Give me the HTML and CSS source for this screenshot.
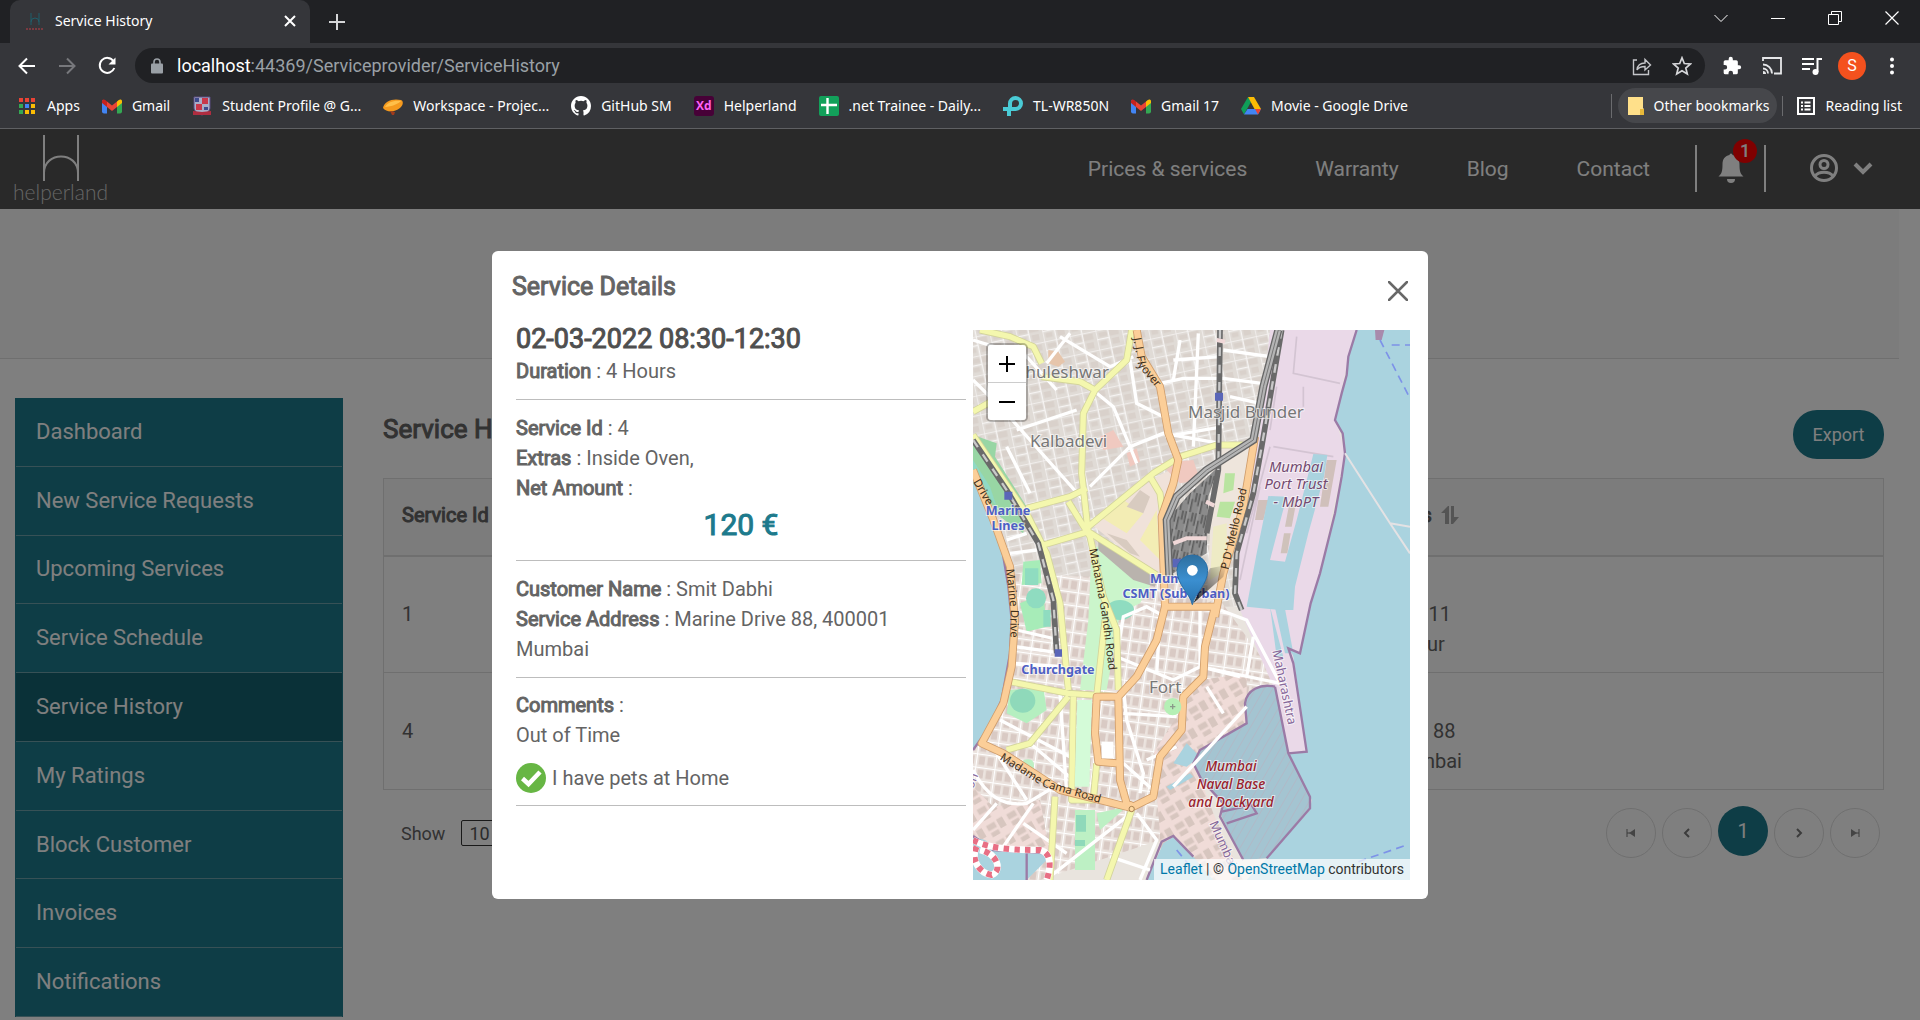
FILE: index.html
```html
<!DOCTYPE html>
<html lang="en">
<head>
<meta charset="utf-8">
<title>Service History</title>
<link rel="stylesheet" href="styles.css">
</head>
<body>
<svg class="defs" width="0" height="0" aria-hidden="true">
  <symbol id="gmail" viewBox="0 0 20 20">
    <path fill="#4285f4" d="M0 4v11.500a2 2 0 0 0 2 2h3V8z"/><path fill="#34a853" d="M20 4v11.500a2 2 0 0 1-2 2h-3V8z"/>
    <path fill="#fbbc04" d="M15 5.500 16.800 4C18.200 2.800 20 3.500 20 5.200V7l-5 4z"/><path fill="#c5221f" d="M5 5.500 3.200 4C1.800 2.800 0 3.500 0 5.200V7l5 4z"/>
    <path fill="#ea4335" d="M5 5.500l5 4 5-4V11l-5 4-5-4z"/>
  </symbol>
</svg>

<header class="browser">
  <div class="tabstrip">
    <div class="tab">
      <svg class="i20" viewBox="0 0 20 20"><path d="M6 2v12M14 2v12M6 11a4 4 0 0 1 8 0" fill="none" stroke="#1f5f6b"/><path d="M1 18h18" stroke="#7a3a40" stroke-width="2" stroke-dasharray="2 1"/></svg>
      <span class="tab-title">Service History</span>
      <button class="bare" aria-label="Close tab"><svg width="12" height="12" viewBox="0 0 12 12"><path d="M1 1l10 10M11 1L1 11" stroke="#fff" stroke-width="2"/></svg></button>
    </div>
    <button class="bare newtab" aria-label="New tab"><svg width="16" height="16" viewBox="0 0 16 16"><path d="M8 0v16M0 8h16" stroke="#d5d6d8" stroke-width="2"/></svg></button>
    <div class="winctl">
      <button class="bare" aria-label="Search tabs"><svg width="14" height="14" viewBox="0 0 14 14"><path d="M.5 4L7 10.500 13.500 4" fill="none" stroke="#fff"/></svg></button>
      <button class="bare" aria-label="Minimize"><svg width="14" height="14" viewBox="0 0 14 14"><path d="M0 7.500h14" stroke="#fff"/></svg></button>
      <button class="bare" aria-label="Restore"><svg width="14" height="14" viewBox="0 0 14 14"><path d="M.5 3.500h10v10H.5zM3.500 3V.5h10v10H11" fill="none" stroke="#fff"/></svg></button>
      <button class="bare" aria-label="Close"><svg width="14" height="14" viewBox="0 0 14 14"><path d="M.5.5l13 13M13.500.5l-13 13" stroke="#fff" stroke-width="1.200"/></svg></button>
    </div>
  </div>
  <div class="toolbar">
    <button class="bare tool" aria-label="Back"><svg class="i20" viewBox="0 0 20 20"><path d="M18 10H3M10 2.500L2.500 10l7.500 7.500" fill="none" stroke="#fff" stroke-width="2"/></svg></button>
    <button class="bare tool" aria-label="Forward"><svg class="i20" viewBox="0 0 20 20"><path d="M2 10h15M10 2.500l7.500 7.500-7.500 7.500" fill="none" stroke="#77787c" stroke-width="2"/></svg></button>
    <button class="bare tool" aria-label="Reload"><svg class="i20" viewBox="0 0 20 20"><path d="M16.500 5.200A7.500 7.500 0 1 0 17.300 12" fill="none" stroke="#fff" stroke-width="2"/><path d="M18.500 1.500v7h-7z" fill="#fff"/></svg></button>
    <div class="omnibox">
      <svg width="12" height="16" viewBox="0 0 12 16"><path d="M3 7V4a3 3 0 0 1 6 0v3" fill="none" stroke="#9aa0a6" stroke-width="1.600"/><rect y="5.500" width="12" height="10" rx="1" fill="#9aa0a6"/></svg>
      <span class="url"><b>localhost</b>:44369/Serviceprovider/ServiceHistory</span>
      <button class="bare tool" aria-label="Share"><svg class="i20" viewBox="0 0 20 20"><path d="M5 4H1.500v14.500h15V14M5 14c.5-5 3-7 8-7V3.500L18.500 9 13 14v-3.500c-4 0-6.500 1-8 3.500z" fill="none" stroke="#c4c5c9" stroke-width="1.400"/></svg></button>
      <button class="bare tool" aria-label="Bookmark"><svg class="i20" viewBox="0 0 20 20"><path d="M10 1.800l2.300 5.700 6.200.5-4.700 4 1.500 6-5.300-3.300L4.700 18l1.500-6-4.700-4 6.200-.5z" fill="none" stroke="#d5d6d9" stroke-width="1.700"/></svg></button>
    </div>
    <button class="bare tool" aria-label="Extensions"><svg class="i20" viewBox="0 0 24 24"><path fill="#fff" d="M20.500 11H19V7a2 2 0 0 0-2-2h-4V3.500a2.500 2.500 0 0 0-5 0V5H4a2 2 0 0 0-2 2v3.800h1.500a2.700 2.700 0 0 1 0 5.400H2V20a2 2 0 0 0 2 2h3.800v-1.500a2.700 2.700 0 0 1 5.400 0V22H17a2 2 0 0 0 2-2v-4h1.500a2.500 2.500 0 0 0 0-5z"/></svg></button>
    <button class="bare tool" aria-label="Cast"><svg class="i20" viewBox="0 0 20 20"><path d="M1 5V2h18v15.500h-7M1 8.500a9 9 0 0 1 9 9M1 12.500a5 5 0 0 1 5 5" fill="none" stroke="#e6e7e9" stroke-width="1.800"/><path d="M1 15a3 3 0 0 1 3 3H1z" fill="#e6e7e9"/></svg></button>
    <button class="bare tool" aria-label="Media"><svg class="i20" viewBox="0 0 20 20"><path d="M0 3h12M0 8h12M0 13h8M15.500 16V3H20" fill="none" stroke="#fff" stroke-width="2"/><circle cx="13.500" cy="16" r="3" fill="#fff"/></svg></button>
    <button class="bare tool" aria-label="Profile"><span class="avatar">S</span></button>
    <button class="bare tool" aria-label="Menu"><svg class="i20" viewBox="0 0 20 20" fill="#fff"><circle cx="10" cy="3.500" r="2"/><circle cx="10" cy="10" r="2"/><circle cx="10" cy="16.500" r="2"/></svg></button>
  </div>
  <nav class="bookmarks">
    <a href="#"><svg width="18" height="20" viewBox="0 0 18 20"><g fill="#ea4335"><path d="M0 2h4v4H0z"/><path d="M6 2h4v4H6z"/><path d="M12 2h4v4h-4z"/></g><path fill="#34a853" d="M0 8h4v4H0zM0 14h4v4H0z"/><path fill="#4285f4" d="M6 8h4v4H6z"/><path fill="#fbbc04" d="M12 8h4v4h-4zM6 14h4v4H6zM12 14h4v4h-4z"/></svg>Apps</a>
    <a href="#"><svg class="i20"><use href="#gmail"/></svg>Gmail</a>
    <a href="#"><svg class="i20" viewBox="0 0 20 20"><path d="M2 1h16v11c0 3-4 6-8 7-4-1-8-4-8-7z" fill="#a9aec8" stroke="#5b4a80"/><path d="M10 2h6v6h-6zM4 8h6v6H4z" fill="#c8374a"/><path d="M3 2h4v4H3zM12 11h4v3h-4z" fill="#3e4a8c"/><path d="M1 15l9 1 9-1v4H1z" fill="#b02d40"/></svg>Student Profile @ G...</a>
    <a href="#"><svg class="i20" viewBox="0 0 20 20"><path d="M0 12C1 5 10 2 18 4c3 1 2 6-1 8C11 17 3 16 0 12z" fill="#f59a1e"/><path d="M2 11c3-5 9-7 16-6-1 2-10 6-16 6z" fill="#ffc04a"/><path d="M7 15l5 1-1 3H9z" fill="#a03a1c"/></svg>Workspace - Projec...</a>
    <a href="#"><svg class="i20" viewBox="0 0 16 16"><path fill="#fff" d="M8 0C3.580 0 0 3.580 0 8c0 3.540 2.290 6.530 5.470 7.590.4.070.55-.17.55-.38 0-.19-.01-.82-.01-1.490-2.010.37-2.530-.49-2.690-.94-.09-.23-.48-.94-.82-1.130-.28-.15-.68-.52-.01-.53.63-.01 1.080.58 1.230.82.72 1.210 1.870.87 2.330.66.070-.52.28-.87.51-1.070-1.780-.2-3.640-.89-3.640-3.950 0-.87.31-1.590.82-2.150-.08-.2-.36-1.020.08-2.120 0 0 .67-.21 2.200.82a7.600 7.600 0 0 1 4 0c1.530-1.040 2.200-.82 2.200-.82.44 1.100.16 1.920.08 2.120.51.56.82 1.270.82 2.150 0 3.070-1.870 3.750-3.650 3.950.29.25.54.73.54 1.480 0 1.070-.01 1.930-.01 2.200 0 .21.15.46.55.38A8 8 0 0 0 16 8c0-4.420-3.580-8-8-8z"/></svg>GitHub SM</a>
    <a href="#"><span class="xd" aria-hidden="true">Xd</span>Helperland</a>
    <a href="#"><svg class="i20" viewBox="0 0 20 20"><rect width="20" height="20" rx="2" fill="#12a05a"/><path d="M8.500 2v16M2 9h16" stroke="#fff" stroke-width="2.400"/></svg>.net Trainee - Daily...</a>
    <a href="#"><svg class="i20" viewBox="0 0 20 20"><path d="M7 11V7.500A5.500 5.500 0 1 1 12.500 13H0M6 20v-8" fill="none" stroke="#4acbd6" stroke-width="4"/></svg>TL-WR850N</a>
    <a href="#"><svg class="i20"><use href="#gmail"/></svg>Gmail 17</a>
    <a href="#"><svg class="i20" viewBox="0 0 20 20"><path fill="#0f9d58" d="M7 1L0 13l3 5.500 7-12.500z"/><path fill="#fbbc04" d="M7 1h6l7 12h-6.500z"/><path fill="#4285f4" d="M3 18.500L6.500 13H20l-3 5.500z"/><path fill="#ea4335" d="M14 13h6l-3 5.500z"/></svg>Movie - Google Drive</a>
    <span class="bm-right">
      <a href="#" class="pill"><svg width="16" height="18" viewBox="0 0 16 18"><path fill="#ffe08a" d="M0 0h15v11l1 1v6H0z"/><path fill="#e8b93a" d="M12 12h4v6h-4z"/></svg>Other bookmarks</a>
      <a href="#" class="reading"><svg width="18" height="18" viewBox="0 0 18 18"><rect x="1" y="1" width="16" height="16" fill="none" stroke="#fff" stroke-width="2"/><path d="M4 5.500h2M4 9h2M4 12.500h2M7.500 5.500h6M7.500 9h6M7.500 12.500h6" stroke="#fff" stroke-width="1.800"/></svg>Reading list</a>
    </span>
  </nav>
</header>

<div class="page">
  <header class="site">
    <a href="#" class="logo"><svg width="36" height="46" viewBox="0 0 36 46"><path d="M1 0v46M35 0v46M1 38c0-22 34-22 34 0" fill="none" stroke="#fff" stroke-width="2"/></svg><span>helperland</span></a>
    <nav class="sitenav">
      <a href="#">Prices &amp; services</a><a href="#">Warranty</a><a href="#">Blog</a><a href="#">Contact</a>
    </nav>
    <button class="bare bell" aria-label="Notifications"><svg width="26" height="30" viewBox="0 0 26 30" fill="#fff"><path d="M11.500 2a1.500 1.500 0 0 1 3 0c5 1 7 4.500 7 9.500 0 7 1 9.500 4 12H.5c3-2.500 4-5 4-12 0-5 2-8.500 7-9.500z"/><path d="M9 26h8a4 4 0 0 1-8 0z"/></svg><span class="badge">1</span></button>
    <button class="bare account" aria-label="Account"><svg width="28" height="28" viewBox="0 0 28 28" fill="none" stroke="#fff" stroke-width="3"><circle cx="14" cy="14" r="12.500"/><circle cx="14" cy="10.500" r="4"/><path d="M5 22c4-5 14-5 18 0"/></svg><svg width="20" height="14" viewBox="0 0 20 14"><path d="M2 3l8 8 8-8" fill="none" stroke="#fff" stroke-width="4"/></svg></button>
  </header>
  <div class="banner"></div>
  <div class="columns">
    <nav class="sidebar">
      <a href="#">Dashboard</a><a href="#">New Service Requests</a><a href="#">Upcoming Services</a><a href="#">Service Schedule</a><a href="#" class="active">Service History</a><a href="#">My Ratings</a><a href="#">Block Customer</a><a href="#">Invoices</a><a href="#">Notifications</a>
    </nav>
    <main class="content">
      <div class="titlebar"><h1>Service History</h1><button class="export">Export</button></div>
      <table>
        <thead><tr><th>Service Id</th><th class="cust">Customer Details <svg width="18" height="18" viewBox="0 0 18 18" fill="#a8a8a8"><path d="M4 18V7H0L7 0h1v18zM10 0h3v11h5l-6 7h-2z"/></svg></th></tr></thead>
        <tbody>
          <tr><td>1</td><td class="addr">Castle Road 11<br>302001 Jaipur</td></tr>
          <tr><td>4</td><td class="addr">Marine Drive 88<br>400001 Mumbai</td></tr>
        </tbody>
      </table>
      <div class="tablefoot">
        <label for="size">Show</label><select id="size"><option>10</option></select>
        <div class="pager">
          <button aria-label="First"><svg width="10" height="10" viewBox="0 0 10 10"><path d="M1 1v8M1 5h3" stroke="#777"/><path d="M9 1v8L3 5z" fill="#888"/></svg></button>
          <button aria-label="Previous"><svg width="10" height="10" viewBox="0 0 10 10"><path d="M7 1L3 5l4 4" fill="none" stroke="#777" stroke-width="2"/></svg></button>
          <button class="current">1</button>
          <button aria-label="Next"><svg width="10" height="10" viewBox="0 0 10 10"><path d="M3 1l4 4-4 4" fill="none" stroke="#777" stroke-width="2"/></svg></button>
          <button aria-label="Last"><svg width="10" height="10" viewBox="0 0 10 10"><path d="M9 1v8M9 5H6" stroke="#777"/><path d="M1 1v8l6-4z" fill="#888"/></svg></button>
        </div>
      </div>
    </main>
  </div>

  <div class="overlay">
    <section class="modal" role="dialog" aria-labelledby="mt">
      <div class="modal-head"><h2 id="mt">Service Details</h2><button class="bare" aria-label="Close"><svg width="20" height="20" viewBox="0 0 20 20"><path d="M1 1l18 18M19 1L1 19" stroke="#686868" stroke-width="2.500" stroke-linecap="round"/></svg></button></div>
      <div class="modal-body">
        <div class="details">
          <div class="block first"><h3>02-03-2022 08:30-12:30</h3><p><b>Duration</b> : 4 Hours</p></div>
          <div class="block"><p><b>Service Id</b> : 4</p><p><b>Extras</b> : Inside Oven,</p><p><b>Net Amount</b> :</p><p class="amount">120 €</p></div>
          <div class="block"><p><b>Customer Name</b> : Smit Dabhi</p><p><b>Service Address</b> : Marine Drive 88, 400001 Mumbai</p></div>
          <div class="block"><p><b>Comments</b> :</p><p>Out of Time</p><p class="pets"><svg width="30" height="30" viewBox="0 0 30 30"><circle cx="15" cy="15" r="15" fill="#67b644"/><path d="M6.500 15.500l6 5.500L24 9" fill="none" stroke="#fff" stroke-width="4.500"/></svg>I have pets at Home</p></div>
        </div>
        <div class="map">
<svg class="tiles" viewBox="39 30 1311 1650" preserveAspectRatio="xMidYMid slice">
  <defs>
    <pattern id="g1" width="78" height="58" patternUnits="userSpaceOnUse" patternTransform="rotate(-12)"><rect width="78" height="58" fill="#e0dbd6"/><path d="M8 8h26v14H8zM40 6h28v18H40zM8 34h20v14H8zM44 32h22v18H44z" fill="#d9d1cb"/><path d="M0 0h78M0 28h36M37 0v58M0 0v58" stroke="#f6f4f3" stroke-width="4"/></pattern>
    <pattern id="g2" width="58" height="40" patternUnits="userSpaceOnUse" patternTransform="rotate(8)"><rect width="58" height="40" fill="#ebe3de"/><path d="M8 7h18v26H8zM34 7h18v26H34z" fill="#d9cac4"/><path d="M0 0h58M0 0v40" stroke="#fff" stroke-width="6"/></pattern>
    <pattern id="g3" width="70" height="56" patternUnits="userSpaceOnUse" patternTransform="rotate(-30)"><rect width="70" height="56" fill="#f0dcd8"/><path d="M8 10h28v18H8zM44 8h20v30H44zM10 36h26v14H10z" fill="#d7c6bf"/></pattern>
    <pattern id="hatch" width="22" height="22" patternUnits="userSpaceOnUse" patternTransform="rotate(-60)"><rect width="22" height="22" fill="#a4c4d1"/><path d="M0 0h22" stroke="#b3b5c3" stroke-width="4"/></pattern>
    <pattern id="rails" width="30" height="60" patternUnits="userSpaceOnUse" patternTransform="rotate(12)"><rect width="30" height="60" fill="#8b8b8b"/><path d="M4 0v38M14 20v40M24 0v28" stroke="#5c5c5c" stroke-width="5"/><path d="M9 0v60" stroke="#b5b5b5" stroke-width="2"/></pattern>
    <linearGradient id="pin" x2="0" y2="1"><stop stop-color="#2e6f9e"/><stop offset=".5" stop-color="#3b8fd0"/><stop offset="1" stop-color="#2771ad"/></linearGradient>
    <linearGradient id="shade" x1="0" y1="1" x2="1" y2="0"><stop stop-opacity=".85"/><stop offset="1" stop-opacity="0"/></linearGradient>
    <path id="yel" d="M60 30L150 50 220 80 245 130M245 170L360 185 405 210 500 120 515 30M405 210L370 280 365 460 385 640M39 275L120 230M200 565L330 530 380 505M385 620L580 460 660 410 770 375 850 375M250 675L385 635 590 765M325 545L390 650 430 830 470 930 475 1110M570 470L600 520 610 600M39 345L130 480 205 590 260 700 300 850 325 1110M150 1085L325 1120 470 1130M325 1130L210 1270 140 1290M435 900L410 1130M340 1130L335 1440 400 1440 410 1330M285 1430L270 1680M515 1470L440 1680"/>
    <path id="org" d="M530 30L545 110 600 200 625 340 655 420 640 490 605 590 615 860 590 960 530 1070 475 1130 410 1130 405 1240 415 1325 470 1330M475 1130L480 1380 500 1450 520 1460 580 1430 600 1310 665 1230 670 1130 730 1070 735 980 765 860 620 860M765 890L790 760 850 560 885 350M39 450L100 600 150 740 165 900 155 1040 130 1150 65 1270 130 1300 300 1410 520 1465"/>
  </defs>
  <rect x="39" y="30" width="1311" height="1650" fill="#e9e4de"/>
  <rect x="39" y="30" width="900" height="830" fill="url(#g1)"/>
  <path d="M130 760L640 780 780 840 960 1090 860 1200 640 1460 600 1560 240 1680H39V1290z" fill="url(#g2)"/>
  <!-- tinted quarters -->
  <path d="M390 610L590 470 650 440 640 540 600 620 600 770 540 730z" fill="#f0e2da"/>
  <path d="M420 590l70-50 60 40-50 60zM540 660l50-90 10 150z" fill="#f3edb4"/>
  <path d="M440 640l60 20 40 50-30-10zM500 560l40-50 30 20-20 50zM400 650l30 10 10 40z" fill="#d8cbc0"/>
  <path d="M500 400l30-15 10 40-30 15zM600 430l100-10 20 60-60 10zM420 350l40-20 30 50-60 10z" fill="#f0c9c0"/>
  <path d="M265 90l30 5 20 30-20 15-30-10z" fill="#e6c5ab"/>
  <path d="M780 380L870 370 845 540 780 830 740 850 750 640z" fill="#eee5dc"/>
  <path d="M760 620l40-10 0 140-50 30z" fill="#eeebc5"/>
  <path d="M795 460l30 0-5 50-30 10zM780 545l45 0-15 50-40-5z" fill="#b9e4a0"/>
  <!-- maidans and parks -->
  <path d="M39 345L110 370 105 410 200 560 190 640 120 590 39 470z" fill="#98d6a4"/>
  <path d="M39 420L90 500 110 560 39 460z" fill="#90d9c5"/>
  <path d="M395 690L430 670 580 780 540 850 480 880 440 1110 360 1110 385 900z" fill="#cbf5cb"/>
  <path d="M415 655L595 765 585 800 520 780 415 690z" fill="#b9b3ad"/>
  <path d="M190 725l50-5 5 70-60 5zM180 850l70-30 10 100-60 15z" fill="#a7ecb8"/>
  <circle cx="228" cy="835" r="30" fill="#8fdcc0"/><path d="M195 745h40v50h-40zM250 870h22v50h-22z" fill="#8fdcc0"/>
  <ellipse cx="480" cy="870" rx="42" ry="30" fill="#8fdcc0"/>
  <path d="M150 1110l100-10 10 70-60 40-60-30z" fill="#b5efc0"/><ellipse cx="188" cy="1142" rx="38" ry="36" fill="#8fd9ba"/>
  <path d="M190 1320q40-10 30 30l-30-5zM345 1470h60v180h-60zM410 1480l90-20-80 70z" fill="#bdf0c4"/>
  <path d="M348 1485h30v50h-30zM345 1560h30v18h-30z" fill="#8fd9ba"/>
  <!-- port land -->
  <path d="M930 30H1190L1150 180 1128 300 1155 400 1080 760 1040 920 1015 1005 1040 1295 985 1300 940 1100 840 870 825 780 900 330z" fill="#ead9e8"/>
  <path d="M1010 50L1000 160 1140 190M950 200L930 330M1030 200v60M940 380l180 30M860 640L930 380M840 780L900 500" stroke="#d3c4d2" stroke-width="5" fill="none"/>
  <path d="M895 540h30l-15 60h-25zM1100 420h30l-25 140h-25z" fill="#d0c0bb"/>
  <!-- warehouses by the docks -->
  <path d="M580 1300L720 1080 860 1060 860 1210 700 1320 760 1480 850 1680H590L600 1540z" fill="url(#g3)"/>
  <path d="M39 1400L100 1460 240 1440 270 1600 230 1590 90 1580 39 1550z" fill="url(#g3)"/>
  <!-- water -->
  <g fill="#aad3df">
    <path d="M1190 30L1165 110 1160 165 1145 220 1125 300 1148 340 1155 400 1145 470 1125 580 1080 760 1052 850 1020 1000 990 985 1000 1010 1040 1295 985 1300 1055 1440 1050 1470 920 1615 860 1680H1350V30z"/>
    <path d="M39 460L100 600 125 680 145 800 155 900 150 1000 125 1140 85 1225 39 1290z"/>
    <path d="M39 1550L75 1560 110 1590 230 1595 270 1610 200 1680H39z"/>
    <path d="M610 1570L640 1550 700 1610 760 1680H560z"/>
    <path d="M925 528L980 530 930 720 975 725 1010 600 1060 402 1102 405 1092 470 1045 640 1005 800 1000 870 960 870 860 860 890 700z"/>
    <path d="M940 840l30 0 30 160-25 0zM930 860l40 150-20 0z"/>
    <path d="M640 1330l40-60 40 40-40 30zM620 1400l70-40 10 10-70 40z"/>
  </g>
  <path d="M945 1100C900 1090 860 1110 855 1150L860 1210 720 1290 700 1330 725 1380 790 1450 785 1490 850 1620 920 1615 1050 1460 1050 1430 985 1300z" fill="url(#hatch)"/>
  <path d="M972 640h20l-10 60h-20zM990 540h20l-15 80h-20z" fill="#cfc2bb"/>
  <g fill="none" stroke="#9b7ba6" stroke-width="7">
    <path d="M1190 30L1165 110 1160 165 1145 220 1125 300 1148 340 1155 400 1145 470 1125 580 1080 760 1052 850 1020 1000 985 985 1000 1030 1040 1295 985 1300M945 1100C900 1090 860 1110 855 1150L860 1210 720 1290 700 1330 725 1380 790 1450 780 1490 850 1620M920 1615L1050 1465V1430L985 1300 945 1100"/>
    <path d="M39 460L100 600 125 680 145 800 155 900 150 1000 125 1140 85 1225 39 1290M39 1548L100 1590 260 1600M200 1600V1680M560 1680L605 1565 640 1548 700 1610M800 1510l90-30-15-25-90 20"/>
  </g>
  <path d="M1155 400L1290 610 1350 700M1290 610L1350 620" stroke="#e4e2e4" stroke-width="6" fill="none"/>
  <path d="M1245 30h28l-8 30h-18z" fill="#a88aac"/>
  <path d="M1260 60L1350 235M1295 75h55M1195 1625L1340 1575M650 1590l50 60" stroke="#7d92e8" stroke-width="5" stroke-dasharray="24 16" fill="none"/>
  <!-- minor white streets -->
  <g stroke="#fff" fill="none" stroke-width="10">
    <path d="M39 180L130 270 370 540M39 60L200 110 290 210M300 50L450 140 520 110M405 215L460 260 510 380 530 430M390 500L510 380 610 340 780 370M170 330L350 270M210 520L140 380M600 190L670 175 790 175 905 190M640 120L780 110M790 90L930 110M810 230L900 250M615 350L790 320M660 60L640 180M715 40L700 380M510 120L530 250 610 290M330 40L260 130"/>
    <path d="M615 890L560 860 490 890 470 1010 640 1080 720 1040 840 1070M780 870L860 900 960 1090 720 1040M720 870V1040M600 900L590 1060M880 950L860 1070M490 1100L500 1200 550 1360 540 1420M490 1330L590 1420M490 1180L650 1190M560 1320L650 1280M640 1400L860 1160M740 1100L790 1180"/>
    <path d="M170 930L300 960M165 980L310 1000M160 1030L310 1040M120 1200L330 1310M210 1270L340 1380M300 1120L320 1420M110 1300L200 1440M39 1350C80 1430 130 1460 200 1450L300 1390M110 1450L39 1530M220 1450L130 1580M500 1490L270 1670M530 1480L590 1560 540 1680M190 1510L320 1600M450 1610L570 1650M140 660L200 640M150 700L230 690"/>
  </g>
  <!-- main roads -->
  <g fill="none" stroke-linejoin="round">
    <use href="#yel" stroke="#d3d49b" stroke-width="21"/>
    <use href="#yel" stroke="#f4f7ae" stroke-width="16"/>
  </g>
  <path d="M352 1140h44l-8 260h-44z" fill="#d4fbd8"/>
  <g fill="none" stroke-linejoin="round">
    <use href="#org" stroke="#cf9d6c" stroke-width="24"/>
    <use href="#org" stroke="#fbce98" stroke-width="19"/>
  </g>
  <!-- railways -->
  <path d="M775 440L745 530 740 700 640 760 620 600 690 520z" fill="url(#rails)"/>
  <g fill="none">
    <path d="M780 30L775 450 740 640M965 30L905 380 880 520 830 700 825 820 845 870M39 360L140 510 235 670 280 840 290 1000" stroke="#6a6a6a" stroke-width="17"/>
    <path d="M780 30L775 450M965 30L905 380 880 520 830 700 825 820 845 870M39 360L140 510 235 670 280 840 290 1000" stroke="#c9c9c9" stroke-width="7" stroke-dasharray="26 26"/>
    <path d="M955 30L910 200 880 360 740 450 650 530 620 600 628 770" stroke="#666" stroke-width="24"/><path d="M955 30L910 200 880 360 740 450 650 530 620 600 628 770" stroke="#b5b5b5" stroke-width="16"/><path d="M955 30L910 200 880 360 740 450 650 530 620 600 628 770" stroke="#777" stroke-width="3"/>
    <path d="M640 670L680 655 740 655M738 545l25 12M770 60l25 5" stroke="#f0d8d8" stroke-width="12"/>
    <path d="M39 1560C90 1590 190 1590 240 1590 280 1600 270 1650 260 1680M50 1580C30 1620 60 1660 95 1665 130 1650 110 1600 60 1590" stroke="#fff" stroke-width="20"/>
    <path d="M39 1560C90 1590 190 1590 240 1590 280 1600 270 1650 260 1680M50 1580C30 1620 60 1660 95 1665 130 1650 110 1600 60 1590" stroke="#e86f84" stroke-width="18" stroke-dasharray="16 16"/>
  </g>
  <path d="M765 218h24v24h-24zM133 515h24v24h-24zM284 988h22v22h-22zM638 716h26v26h-26z" fill="#5a66b8"/>
  <circle cx="638" cy="1160" r="26" fill="#b5efb5"/><path d="M630 1160h16M638 1152v16" stroke="#8a9a8a" stroke-width="4"/>
  <circle cx="515" cy="1467" r="8" fill="#ffd9a0" stroke="#a88050" stroke-width="3"/>
  <path d="M425 1265h35v50h-35z" fill="#fff"/>
  <!-- labels -->
  <g class="lbl place"><text x="163" y="173">Bhuleshwar</text><text x="210" y="381">Kalbadevi</text><text x="684" y="295">Masjid Bunder</text><text x="567" y="1118">Fort</text></g>
  <g class="lbl station"><text x="144" y="585">Marine</text><text x="144" y="629">Lines</text><text x="648" y="790">Mumbai</text><text x="648" y="834">CSMT (Suburban)</text><text x="294" y="1062">Churchgate</text></g>
  <g class="lbl port"><text x="1008" y="455">Mumbai</text><text x="1008" y="508">Port Trust</text><text x="1008" y="561">- MbPT</text></g>
  <g class="lbl naval"><text x="813" y="1354">Mumbai</text><text x="813" y="1408">Naval Base</text><text x="813" y="1461">and Dockyard</text></g>
  <g class="lbl road">
    <path id="p1" d="M520 55L535 140 590 205 620 290" fill="none" stroke="none"/><text><textPath href="#p1">J. J. Flyover</textPath></text>
    <path id="p2" d="M39 485L100 590" fill="none" stroke="none"/><text><textPath href="#p2">Drive</textPath></text>
    <path id="p3" d="M138 748L152 870 150 1020" fill="none" stroke="none"/><text><textPath href="#p3">Marine Drive</textPath></text>
    <path id="p4" d="M388 688L425 880 450 1080" fill="none" stroke="none"/><text><textPath href="#p4">Mahatma Gandhi Road</textPath></text>
    <path id="p5" d="M805 750L862 500" fill="none" stroke="none"/><text><textPath href="#p5">P D' Mello Road</textPath></text>
    <path id="p6" d="M118 1318L250 1400 440 1455" fill="none" stroke="none"/><text><textPath href="#p6">Madame Cama Road</textPath></text>
  </g>
  <g class="lbl state"><text transform="translate(937 992) rotate(78)">Maharashtra</text><text transform="translate(748 1510) rotate(66)">Mumbai</text><text transform="translate(55 1365) rotate(-70)" text-anchor="end">on</text></g>
  <!-- marker -->
  <path d="M700 850L750 745 800 735 790 770z" fill="url(#shade)"/>
  <path d="M697 854C690 820 651 795 651 751a46 46 0 0 1 92 0c0 44-39 69-46 103z" fill="url(#pin)" stroke="#2a6ea6" stroke-width="3"/>
  <circle cx="697" cy="751" r="16" fill="#fff"/>
</svg>
          <div class="zoom"><button aria-label="Zoom in"><svg width="16" height="16" viewBox="0 0 16 16"><path d="M8 0v16M0 8h16" stroke="#000" stroke-width="2"/></svg></button><button aria-label="Zoom out"><svg width="16" height="16" viewBox="0 0 16 16"><path d="M0 8h16" stroke="#000" stroke-width="2"/></svg></button></div>
          <div class="attrib"><a href="#">Leaflet</a> | © <a href="#">OpenStreetMap</a> contributors</div>
        </div>
      </div>
    </section>
  </div>
</div>
</body>
</html>
```
FILE: styles.css
```css
* { box-sizing: border-box; }
body { margin: 0; height: 100vh; overflow: hidden; display: flex; flex-direction: column; font-family: Roboto, "Liberation Sans", sans-serif; color: #646464; }
h1, h2, h3, p { margin: 0; }
a { color: inherit; text-decoration: none; }
svg { display: block; flex: none; }
.defs { position: absolute; }
.bare { background: none; border: 0; padding: 0; color: inherit; font: inherit; display: flex; align-items: center; justify-content: center; flex: none; }
.i20 { width: 20px; height: 20px; }

/* browser frame */
.browser { background: #35363a; color: #fff; font: 14px/20px "Noto Sans", "Open Sans", sans-serif; border-bottom: 1px solid #5f6063; flex: none; }
.tabstrip { display: flex; align-items: center; background: #202124; height: 43px; padding-left: 10px; }
.tab { width: 300px; height: 43px; background: #35363a; border-radius: 10px 10px 0 0; display: flex; align-items: center; gap: 10px; padding: 0 14px 2px 15px; }
.tab-title { flex: 1; }
.newtab { margin-left: 19px; }
.winctl { margin-left: auto; display: flex; height: 36px; align-self: flex-start; }
.winctl button { width: 57px; }
.toolbar { display: flex; align-items: center; height: 45px; padding: 0 8px 0 7px; }
.tool { width: 40px; height: 36px; }
.omnibox { flex: 1; height: 35px; border-radius: 18px; background: #202124; margin: 0 7px 0 8px; display: flex; align-items: center; padding: 0 3px 0 16px; }
.url { flex: 1; margin-left: 14px; font-size: 18px; font-family: Roboto, sans-serif; color: #9aa0a6; }
.url b { font-weight: 400; color: #fff; }
.avatar { width: 28px; height: 28px; border-radius: 50%; background: #f4511e; color: #fff; font: 16px/28px Roboto, sans-serif; }
.bookmarks { display: flex; align-items: center; height: 40px; padding: 0 8px 5px 19px; gap: 22px; white-space: nowrap; }
.bookmarks a { display: flex; align-items: center; gap: 10px; }
.xd { width: 20px; height: 20px; border-radius: 3px; background: #470137; color: #ff61f6; font: bold 12px/20px "Open Sans", sans-serif; text-align: center; }
.bm-right { display: flex; align-items: center; margin-left: auto; border-left: 1px solid #6a6b6e; padding-left: 6px; height: 24px; }
.bookmarks .pill { background: #46474b; border-radius: 18px; height: 35px; padding: 0 8px 0 10px; }
.reading { border-left: 1px solid #6a6b6e; margin-left: 5px; padding: 0 10px 0 14px; }

/* site */
.page { flex: 1; min-height: 0; position: relative; overflow: hidden; background: #fff; }
.site { height: 80px; background: #525252; color: #fff; display: flex; align-items: center; padding: 0 47px 0 13px; }
.logo { display: flex; flex-direction: column; align-items: center; font: 300 21px/22px Lato, sans-serif; color: #ccc; margin-right: auto; }
.sitenav { display: flex; gap: 68px; font-size: 21px; margin-right: 45px; }
.bell { position: relative; width: 71px; height: 47px; margin-bottom: 2px; border: solid #fff; border-width: 0 2px; }
.badge { position: absolute; top: -6px; left: 36px; width: 24px; height: 24px; border-radius: 50%; background: #f00; font-size: 18px; font-weight: 500; line-height: 24px; }
.account { gap: 15px; margin: 0 0 2px 44px; }
.banner { height: 150px; margin-right: 21px; background: #f9f9f9; border-bottom: 1px solid #dedede; }
.columns { display: flex; gap: 40px; padding: 39px 36px 0 15px; }
.sidebar { width: 328px; min-height: 619px; flex: none; background: #1d7a8c; color: #fff; padding: 0 1px; display: grid; grid-auto-rows: 1fr; font-size: 22px; }
.sidebar a { display: flex; align-items: center; padding: 0 20px 1px; border-bottom: 1px solid #6fa3ad; -webkit-text-stroke: 0; }
.sidebar .active { background: #146371; }
.content { flex: 1; min-width: 0; padding-top: 10px; }
.titlebar { display: flex; justify-content: space-between; align-items: flex-start; height: 70px; padding-top: 2px; }
h1 { font-size: 26px; line-height: 38px; font-weight: 400; -webkit-text-stroke: 1px; }
.export { width: 91px; height: 49px; border: 0; border-radius: 24px; background: #1d7a8c; color: #fff; font: 18px Roboto, sans-serif; }
table { width: 100%; border-collapse: collapse; border: 1px solid #dedede; font-size: 20px; line-height: 30px; }
th { height: 77px; text-align: left; background: #f9f9f9; font-weight: 400; -webkit-text-stroke: 1px; border-bottom: 2px solid #dedede; padding: 0 18px 4px; }
td { height: 117px; padding: 0 18px; border-bottom: 1px solid #dedede; }
.cust { width: 623px; }
.cust svg { display: inline-block; vertical-align: -2px; margin-left: 4px; }
td.addr { padding: 29px 0 0 56px; }
.tablefoot { display: flex; align-items: center; padding: 18px 4px 0 18px; font-size: 18px; }
.tablefoot select { margin-left: 16px; width: 60px; height: 26px; padding-left: 3px; font: 18px Roboto, sans-serif; color: #555; background: #fff; border: 1px solid #333; border-radius: 2px; }
.pager { display: flex; gap: 6px; margin-left: auto; }
.pager button { width: 50px; height: 50px; border-radius: 50%; border: 1px solid #dedede; background: none; display: flex; align-items: center; justify-content: center; font: 20px Roboto, sans-serif; padding: 0; }
.pager .current { background: #1d7a8c; color: #fff; border: 0; margin-top: -2px; }

/* dialog */
.overlay { position: absolute; inset: 0; background: rgba(0, 0, 0, .5); display: flex; justify-content: center; align-items: flex-start; padding-top: 122px; }
.modal { width: 936px; background: #fff; border-radius: 6px; padding: 20px 18px 19px 20px; }
.modal-head { display: flex; justify-content: space-between; align-items: flex-start; height: 59px; padding-right: 2px; }
.modal-head button { margin-top: 10px; }
h2 { font-size: 25px; line-height: 32px; font-weight: 400; -webkit-text-stroke: 1px; }
.modal-body { display: flex; gap: 7px; }
.details { flex: 1; padding-left: 4px; font-size: 20px; line-height: 30px; }
.details b { font-weight: 400; -webkit-text-stroke: 1px; }
.block { border-bottom: 1px solid #bdbdbd; padding: 13px 0; }
.block:last-child { padding: 12px 0; }
.first { padding-top: 0; margin-top: -8px; }
h3 { font-size: 27px; line-height: 34px; font-weight: 400; color: #4f4f4f; -webkit-text-stroke: 1px; }
.amount { text-align: center; font-size: 30px; line-height: 44px; color: #1d7a8c; -webkit-text-stroke: 1px; }
.pets { display: flex; gap: 6px; padding-top: 13px; }
.map { width: 437px; height: 550px; position: relative; overflow: hidden; background: #aad3df; }
.tiles { width: 100%; height: 100%; }
.lbl { font-family: "Noto Sans", sans-serif; paint-order: stroke; stroke: rgba(255, 255, 255, .6); stroke-width: 6px; }
.place { font-size: 51px; fill: #777; }
.station { font-size: 38px; font-weight: 700; fill: #4e5fc4; text-anchor: middle; }
.port { font-size: 44px; font-style: italic; fill: #734a70; text-anchor: middle; }
.naval { font-size: 41px; font-style: italic; font-weight: 500; fill: #99222d; text-anchor: middle; }
.road { font-size: 34px; fill: #40301c; stroke: none; }
.state { font-size: 38px; fill: #86679a; }
.zoom { position: absolute; top: 13px; left: 13px; width: 42px; border: 2px solid rgba(0, 0, 0, .25); border-radius: 5px; background-clip: padding-box; }
.zoom button { display: flex; align-items: center; justify-content: center; width: 38px; height: 37px; border: 0; padding: 0; background: #fff; border-radius: 0 0 3px 3px; }
.zoom button:first-child { height: 38px; border-bottom: 1px solid #ccc; border-radius: 3px 3px 0 0; }
.attrib { position: absolute; right: 0; bottom: 0; padding: 0 6px; font-size: 14px; line-height: 21px; color: #333; background: rgba(255, 255, 255, .7); white-space: nowrap; }
.attrib a { color: #0078a8; }
```
